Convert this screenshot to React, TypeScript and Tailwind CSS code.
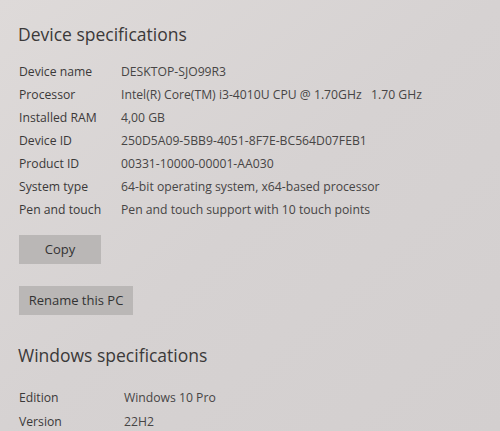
const DEVICE = [
  ["Device name", "DESKTOP-SJO99R3"],
  ["Processor", "Intel(R) Core(TM) i3-4010U CPU @ 1.70GHz   1.70 GHz"],
  ["Installed RAM", "4,00 GB"],
  ["Device ID", "250D5A09-5BB9-4051-8F7E-BC564D07FEB1"],
  ["Product ID", "00331-10000-00001-AA030"],
  ["System type", "64-bit operating system, x64-based processor"],
  ["Pen and touch", "Pen and touch support with 10 touch points"],
];

const WINDOWS = [
  ["Edition", "Windows 10 Pro"],
  ["Version", "22H2"],
];

export default function App() {
  return (
    <div
      className="w-[500px] h-[431px] overflow-hidden bg-gradient-to-br from-[#dedad9] via-[#d6d2d2] to-[#d3cfcf] text-[#3b3939] pl-[19px] pt-[22px]"
      style={{ fontFamily: '"Open Sans", "Noto Sans", sans-serif' }}
    >
      <h2 className="text-[17.5px] leading-[24px] -ml-[1px]">Device specifications</h2>
      <div className="mt-[15px] flex flex-col">
        {DEVICE.map(([label, value]) => (
          <div key={label} className="flex h-[23px] items-center text-[12.2px] whitespace-pre">
            <span className="w-[102px] shrink-0">{label}</span>
            <span className="text-[#474545]">{value}</span>
          </div>
        ))}
      </div>
      <button className="mt-[13px] block w-[82px] h-[29px] bg-[#bab7b6] text-[13px] text-[#333]">Copy</button>
      <button className="mt-[22px] block w-[114px] h-[29px] bg-[#bab7b6] text-[13px] text-[#333]">Rename this PC</button>
      <h2 className="mt-[28px] text-[17.5px] leading-[24px] -ml-[1px]">Windows specifications</h2>
      <div className="mt-[19px] flex flex-col">
        {WINDOWS.map(([label, value]) => (
          <div key={label} className="flex h-[24px] items-center text-[12.2px]">
            <span className="w-[105px] shrink-0">{label}</span>
            <span className="text-[#474545]">{value}</span>
          </div>
        ))}
      </div>
    </div>
  );
}
